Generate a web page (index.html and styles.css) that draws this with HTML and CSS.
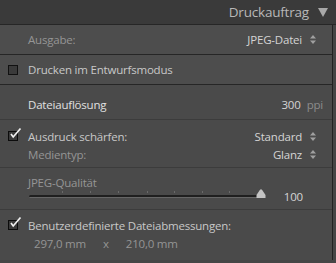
FILE: index.html
```html
<!DOCTYPE html>
<html lang="de">
<head>
    <meta charset="UTF-8">
    <title>Druckauftrag</title>
    <link rel="stylesheet" href="styles.css">
</head>
<body>
    <div class="head">
        <span class="title">Druckauftrag</span>
        <svg class="tri" width="10" height="9" viewBox="0 0 10 9"><path d="M0 0H10L5 9Z" fill="#a8a8a8"/></svg>
    </div>
    <div class="panel">
        <div class="box row">
            <span class="label dim">Ausgabe:</span>
            <span class="value">JPEG-Datei</span>
            <svg class="spin" width="6" height="9" viewBox="0 0 6 9"><path d="M0 3.5L3 0L6 3.5ZM0 5.5L3 9L6 5.5Z" fill="#a0a0a0"/></svg>
        </div>
        <div class="box row">
            <span class="cb"></span>
            <span class="label">Drucken im Entwurfsmodus</span>
        </div>
        <div class="section">
            <div class="group res">
                <div class="line">
                    <span class="label bright">Dateiauflösung</span>
                    <span class="value bright">300</span><span class="unit">ppi</span>
                </div>
            </div>
            <div class="group sharp">
                <div class="line">
                    <span class="cb on"><svg width="14" height="13" viewBox="0 0 14 13"><path d="M3 7L5.2 10L12.5 1.5" fill="none" stroke="#f0f0f0" stroke-width="1.7"/></svg></span>
                    <span class="label">Ausdruck schärfen:</span>
                    <span class="value">Standard</span>
                    <svg class="spin" width="6" height="9" viewBox="0 0 6 9"><path d="M0 3.5L3 0L6 3.5ZM0 5.5L3 9L6 5.5Z" fill="#a0a0a0"/></svg>
                </div>
                <div class="line">
                    <span class="label dim">Medientyp:</span>
                    <span class="value">Glanz</span>
                    <svg class="spin" width="6" height="9" viewBox="0 0 6 9"><path d="M0 3.5L3 0L6 3.5ZM0 5.5L3 9L6 5.5Z" fill="#a0a0a0"/></svg>
                </div>
            </div>
            <div class="group quality">
                <div class="slabel dim">JPEG-Qualität</div>
                <div class="sline">
                    <div class="track">
                        <i style="left: 33px"></i><i style="left: 61px"></i><i style="left: 89px"></i>
                        <i style="left: 118px"></i><i style="left: 145px"></i><i style="left: 173px"></i>
                        <i style="left: 200px"></i>
                        <svg class="thumb" width="10" height="9" viewBox="0 0 10 9"><path d="M3.5 1.5L5 0L6.5 1.5L9.5 6V9H0.5V6Z" fill="#c4c4c4"/></svg>
                    </div>
                    <span class="value num">100</span>
                </div>
            </div>
            <div class="group dims">
                <div class="line">
                    <span class="cb on"><svg width="14" height="13" viewBox="0 0 14 13"><path d="M3 7L5.2 10L12.5 1.5" fill="none" stroke="#f0f0f0" stroke-width="1.7"/></svg></span>
                    <span class="label">Benutzerdefinierte Dateiabmessungen:</span>
                </div>
                <div class="line size dim">297,0 mm<span class="x">x</span>210,0 mm</div>
            </div>
        </div>
    </div>
</body>
</html>
```

FILE: styles.css
```css
body{
    margin: 0;
    background: #454545;
    font-family: "Open Sans", "Liberation Sans", sans-serif;
    font-size: 11.5px;
    letter-spacing: -0.2px;
    color: #cfcfcf;
    width: 336px;
    height: 263px;
    overflow: hidden;
}
.head{
    height: 24px;
    background: #3a3a3a;
    border-bottom: 1px solid #262626;
    display: flex;
    align-items: center;
    justify-content: flex-end;
    padding-right: 8px;
}
.title{
    font-size: 13.5px;
    letter-spacing: -0.2px;
    color: #b8b8b8;
    margin-right: 9px;
}
.tri{
    display: block;
}
.panel{
    width: 332px;
    border-right: 1px solid #222;
}
.box{
    background: #4d4d4d;
    border-bottom: 1px solid #262626;
}
.row{
    height: 29px;
    display: flex;
    align-items: center;
    padding-left: 8px;
}
.row .label{
    margin-left: 20px;
}
.box .cb + .label{
    margin-left: 10px;
}
.label{
    color: #c8c8c8;
}
.dim{
    color: #959595;
}
.bright{
    color: #e0e0e0;
}
.value{
    margin-left: auto;
    color: #d4d4d4;
}
.spin{
    display: block;
    margin: 0 16px 0 8px;
}
.cb{
    width: 10px;
    height: 10px;
    box-sizing: border-box;
    border: 1px solid #111;
    background: #3a3a3a;
    position: relative;
    flex: none;
}
.cb.on{
    border-color: #0c0c0c;
}
.cb svg{
    position: absolute;
    left: -1px;
    top: -5px;
}
.section{
    background: #4a4a4a;
}
.group{
    padding: 0 0 0 8px;
    border-bottom: 1px solid #3c3c3c;
}
.line{
    height: 18px;
    display: flex;
    align-items: center;
}
.line .label{
    margin-left: 20px;
}
.line .cb + .label{
    margin-left: 10px;
}
.res{
    height: 35px;
    box-sizing: border-box;
    padding-top: 10px;
}
.unit{
    color: #8c8c8c;
    margin: 0 9px 0 6px;
}
.sharp{
    height: 48px;
    box-sizing: border-box;
    padding-top: 7px;
}
.quality{
    height: 42px;
    box-sizing: border-box;
    padding-top: 7px;
}
.slabel{
    line-height: 16px;
    margin-left: 20px;
}
.sline{
    height: 10px;
    display: flex;
    align-items: center;
}
.track{
    position: relative;
    margin-left: 21px;
    width: 234px;
    height: 2px;
    background: #1f1f1f;
    border-radius: 2px;
    border-bottom: 1px solid #666;
}
.track i{
    position: absolute;
    top: -4px;
    width: 1px;
    height: 2px;
    background: #6a6a6a;
}
.thumb{
    position: absolute;
    right: -3px;
    top: -6px;
}
.num{
    margin-right: 29px;
}
.dims{
    border-bottom: none;
    padding-top: 6px;
    height: 50px;
    box-sizing: border-box;
}
.size{
    padding-left: 26px;
}
.x{
    margin: 0 17px;
}
```
